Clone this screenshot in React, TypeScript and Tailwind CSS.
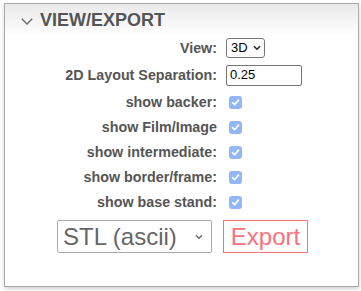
import React from "react";

const Check = () => (
  <span className="flex h-[13px] w-[13px] items-center justify-center rounded-[3px] bg-[#92b7f7]">
    <svg width="9" height="9" viewBox="0 0 10 10" fill="none">
      <path d="M1.8 5.3 L4 7.5 L8.3 2.4" stroke="white" strokeWidth="1.9" strokeLinecap="round" strokeLinejoin="round" />
    </svg>
  </span>
);

const Row = ({ label, children, h = "h-[25px]" }: { label: string; children: React.ReactNode; h?: string }) => (
  <div className={`flex items-center ${h}`}>
    <div className="w-[212px] whitespace-nowrap text-right text-[14.3px] font-bold leading-none text-[#555]">{label}</div>
    <div className="ml-[9px] flex items-center">{children}</div>
  </div>
);

export default function App() {
  const checks = ["show backer:", "show Film/Image", "show intermediate:", "show border/frame:", "show base stand:"];
  return (
    <div className="h-[291px] w-[361px] overflow-hidden bg-white pl-[4px] pt-[3px]" style={{ fontFamily: '"Liberation Sans", Arial, sans-serif' }}>
      <div className="h-[284px] w-[355px] border border-[#aaa] bg-white shadow-[0_2px_4px_rgba(0,0,0,0.18)]">
        <div className="flex h-[32px] items-center bg-gradient-to-b from-[#e9e9e9] to-white pl-[16px]">
          <svg width="12" height="7" viewBox="0 0 12 7" fill="none" className="mt-[2px]">
            <path d="M0.8 0.8 L6 6 L11.2 0.8" stroke="#666" strokeWidth="1.3" />
          </svg>
          <span className="ml-[7px] text-[18px] font-bold leading-none text-[#555]">VIEW/EXPORT</span>
        </div>
        <Row label="View:" h="h-[24px]">
          <div className="flex h-[20px] w-[39px] items-center justify-between rounded-[3px] border border-[#767676] pl-[4px] pr-[3px] text-[13px] text-black">
            <span>3D</span>
            <svg width="8" height="6" viewBox="0 0 8 6" fill="none">
              <path d="M1 1.3 L4 4.3 L7 1.3" stroke="#222" strokeWidth="1.5" />
            </svg>
          </div>
        </Row>
        <div className="h-[3px]" />
        <Row label="2D Layout Separation:" h="h-[24px]">
          <div className="flex h-[21px] w-[76px] items-center rounded-[2px] border border-[#767676] pl-[3px] text-[13px] text-black">0.25</div>
        </Row>
        <div className="h-[3px]" />
        {checks.map((c) => (
          <Row key={c} label={c}>
            <span className="ml-[3px]">
              <Check />
            </span>
          </Row>
        ))}
        <div className="mt-[5px] flex items-center">
          <div className="ml-[52px] flex h-[33px] w-[155px] items-center justify-between rounded-[2px] border border-[#aaa] pl-[5px] pr-[8px] text-[24px] leading-none text-[#666]">
            <span>STL (ascii)</span>
            <svg width="8" height="6" viewBox="0 0 8 6" fill="none">
              <path d="M1 1.3 L4 4.3 L7 1.3" stroke="#666" strokeWidth="1.3" />
            </svg>
          </div>
          <div className="ml-[11px] flex h-[33px] w-[85px] items-center justify-center border border-[#f7727a] text-[24px] leading-none text-[#f7727a]">
            Export
          </div>
        </div>
      </div>
    </div>
  );
}
